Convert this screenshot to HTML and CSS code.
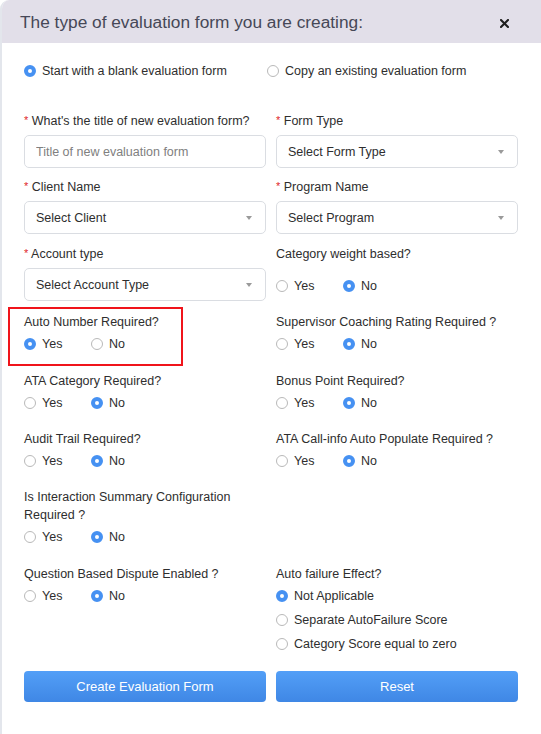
FILE: index.html
```html
<!DOCTYPE html>
<html lang="en">
<head>
<meta charset="utf-8">
<title>Create Evaluation Form</title>
<link rel="stylesheet" href="styles.css">
</head>
<body>
<div class="modal">
  <div class="modal-header">
    <h2 class="modal-title">The type of evaluation form you are creating:</h2>
    <button class="close" type="button" aria-label="Close">
      <svg width="9" height="9" viewBox="0 0 9 9"><path d="M1 1 L8 8 M8 1 L1 8" stroke="#1f1f1f" stroke-width="2.1" stroke-linecap="square"/></svg>
    </button>
  </div>
  <div class="modal-body">
    <div class="mode-row">
      <label class="radio mode-first on"><span class="dot"></span>Start with a blank evaluation form</label>
      <label class="radio"><span class="dot"></span>Copy an existing evaluation form</label>
    </div>

    <div class="row row-a">
      <div class="field">
        <div class="label"><span class="req">*</span> What's the title of new evaluation form?</div>
        <input class="control input" type="text" placeholder="Title of new evaluation form">
      </div>
      <div class="field">
        <div class="label"><span class="req">*</span> Form Type</div>
        <div class="control select"><span>Select Form Type</span><span class="caret"></span></div>
      </div>
    </div>

    <div class="row row-b">
      <div class="field">
        <div class="label"><span class="req">*</span> Client Name</div>
        <div class="control select"><span>Select Client</span><span class="caret"></span></div>
      </div>
      <div class="field">
        <div class="label"><span class="req">*</span> Program Name</div>
        <div class="control select"><span>Select Program</span><span class="caret"></span></div>
      </div>
    </div>

    <div class="row row-c">
      <div class="field">
        <div class="label"><span class="req">*</span> Account type</div>
        <div class="control select"><span>Select Account Type</span><span class="caret"></span></div>
      </div>
      <div class="field">
        <div class="label">Category weight based?</div>
        <div class="opts opts-tall">
          <label class="radio"><span class="dot"></span>Yes</label>
          <label class="radio on"><span class="dot"></span>No</label>
        </div>
      </div>
    </div>

    <div class="row row-d">
      <div class="field highlighted">
        <div class="label">Auto Number Required?</div>
        <div class="opts">
          <label class="radio on"><span class="dot"></span>Yes</label>
          <label class="radio"><span class="dot"></span>No</label>
        </div>
      </div>
      <div class="field">
        <div class="label">Supervisor Coaching Rating Required ?</div>
        <div class="opts">
          <label class="radio"><span class="dot"></span>Yes</label>
          <label class="radio on"><span class="dot"></span>No</label>
        </div>
      </div>
    </div>

    <div class="row row-e">
      <div class="field">
        <div class="label">ATA Category Required?</div>
        <div class="opts">
          <label class="radio"><span class="dot"></span>Yes</label>
          <label class="radio on"><span class="dot"></span>No</label>
        </div>
      </div>
      <div class="field">
        <div class="label">Bonus Point Required?</div>
        <div class="opts">
          <label class="radio"><span class="dot"></span>Yes</label>
          <label class="radio on"><span class="dot"></span>No</label>
        </div>
      </div>
    </div>

    <div class="row row-f">
      <div class="field">
        <div class="label">Audit Trail Required?</div>
        <div class="opts">
          <label class="radio"><span class="dot"></span>Yes</label>
          <label class="radio on"><span class="dot"></span>No</label>
        </div>
      </div>
      <div class="field">
        <div class="label">ATA Call-info Auto Populate Required ?</div>
        <div class="opts">
          <label class="radio"><span class="dot"></span>Yes</label>
          <label class="radio on"><span class="dot"></span>No</label>
        </div>
      </div>
    </div>

    <div class="row row-g">
      <div class="field">
        <div class="label">Is Interaction Summary Configuration Required ?</div>
        <div class="opts">
          <label class="radio"><span class="dot"></span>Yes</label>
          <label class="radio on"><span class="dot"></span>No</label>
        </div>
      </div>
      <div class="field"></div>
    </div>

    <div class="row row-h">
      <div class="field">
        <div class="label">Question Based Dispute Enabled ?</div>
        <div class="opts">
          <label class="radio"><span class="dot"></span>Yes</label>
          <label class="radio on"><span class="dot"></span>No</label>
        </div>
      </div>
      <div class="field">
        <div class="label">Auto failure Effect?</div>
        <div class="opts-stack">
          <label class="radio on"><span class="dot"></span>Not Applicable</label>
          <label class="radio"><span class="dot"></span>Separate AutoFailure Score</label>
          <label class="radio"><span class="dot"></span>Category Score equal to zero</label>
        </div>
      </div>
    </div>

    <div class="row actions">
      <button class="btn" type="button">Create Evaluation Form</button>
      <button class="btn" type="button">Reset</button>
    </div>
  </div>
</div>
</body>
</html>
```

FILE: styles.css
```css
* { box-sizing: border-box; }

html, body {
  margin: 0;
  padding: 0;
  background: #ffffff;
}

body {
  font-family: "Liberation Sans", Arial, Helvetica, sans-serif;
  font-size: 12.5px;
  color: #2e2e2e;
  width: 541px;
  height: 734px;
  overflow: hidden;
}

.modal {
  min-height: 734px;
  border-left: 2px solid #e3e6ec;
  border-top-left-radius: 9px;
  background: #ffffff;
  overflow: hidden;
}

.modal-header {
  height: 43px;
  background: #e2dfe9;
  display: flex;
  align-items: center;
  justify-content: space-between;
  padding: 0 32px 0 18px;
}

.modal-title {
  margin: 0;
  font-weight: normal;
  font-size: 17.3px;
  color: #464857;
  line-height: 22px;
  padding-top: 1px;
}

.close {
  border: 0;
  background: transparent;
  padding: 0;
  width: 9px;
  height: 9px;
  display: flex;
  margin-top: 4px;
  cursor: pointer;
}

.modal-body {
  padding: 19px 0 0 22px;
}

.mode-row {
  display: flex;
}

.mode-first {
  width: 243px;
}

.row {
  display: grid;
  grid-template-columns: 242px 242px;
  column-gap: 10px;
}

.row-a { margin-top: 32px; }
.row-b { margin-top: 10px; }
.row-c { margin-top: 11px; }
.row-d { margin-top: 12px; }
.row-e { margin-top: 19px; }
.row-f { margin-top: 18px; }
.row-g { margin-top: 18px; }
.row-h { margin-top: 19px; }
.actions { margin-top: 18px; }

.label {
  line-height: 18px;
  color: #2e2e2e;
}

.req {
  color: #e0262b;
  font-size: 11px;
  line-height: 0;
  position: relative;
  top: -1px;
}

.control {
  margin-top: 5px;
  height: 33px;
  width: 100%;
  border: 1px solid #dadde2;
  border-radius: 5px;
  background: #fff;
  font-family: inherit;
  font-size: 12.5px;
  color: #2e2e2e;
  padding: 0 12px 0 11px;
}

.input {
  outline: none;
  display: block;
}

.input::placeholder {
  color: #808080;
}

.select {
  display: flex;
  align-items: center;
  justify-content: space-between;
  padding-top: 1px;
}

.caret {
  width: 0;
  height: 0;
  border-left: 3px solid transparent;
  border-right: 3px solid transparent;
  border-top: 4px solid #9a9a9a;
  margin-right: 1px;
}

.opts {
  display: flex;
  margin-top: 4px;
  height: 18px;
}

.opts-tall {
  margin-top: 14px;
}

.opts .radio {
  width: 67px;
}

.opts-stack {
  margin-top: 4px;
  display: flex;
  flex-direction: column;
  gap: 6px;
}

.radio {
  display: inline-flex;
  align-items: center;
  gap: 6px;
  line-height: 18px;
  height: 18px;
  color: #2e2e2e;
  cursor: pointer;
}

.dot {
  width: 12px;
  height: 12px;
  border-radius: 50%;
  border: 1px solid #b9b9b9;
  background: #fff;
  flex: none;
}

.radio.on .dot {
  border: 4px solid #4691f2;
  background: #fff;
}

.highlighted {
  position: relative;
}

.highlighted::after {
  content: "";
  position: absolute;
  left: -16px;
  top: -6px;
  width: 171px;
  height: 55px;
  border: 2px solid #f0141b;
  pointer-events: none;
}

.btn {
  height: 31px;
  border: 0;
  border-radius: 4px;
  background: linear-gradient(to bottom, #539ff7, #3f87e5);
  color: #ffffff;
  font-family: inherit;
  font-size: 13px;
  cursor: pointer;
  padding: 0;
}
```
